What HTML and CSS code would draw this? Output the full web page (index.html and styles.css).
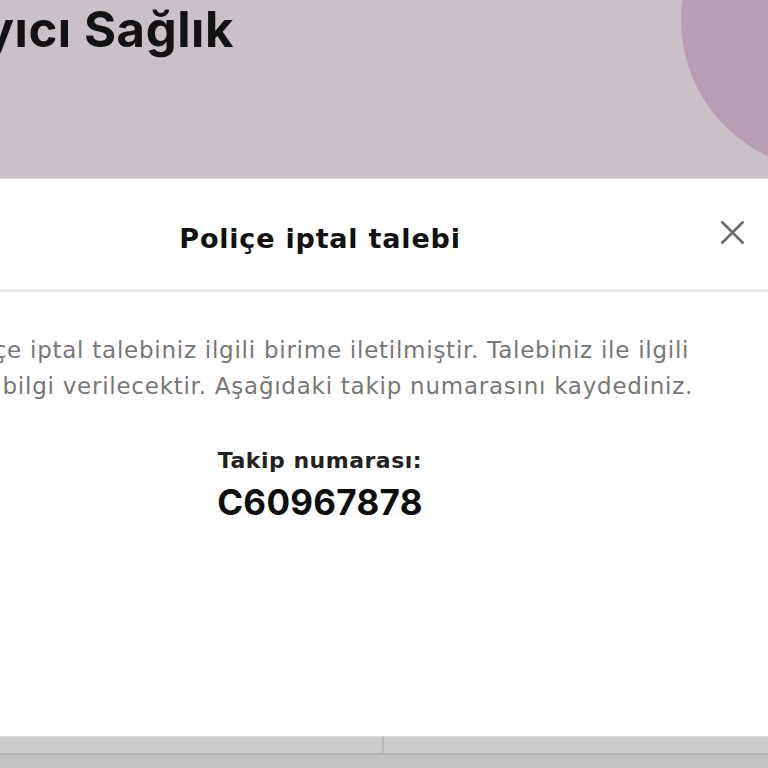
FILE: index.html
```html
<!DOCTYPE html>
<html lang="tr">
<head>
<meta charset="utf-8">
<title>Poliçe iptal talebi</title>
<link rel="stylesheet" href="styles.css">
</head>
<body>
<div class="page">
  <header class="hero">
    <div class="hero-title-wrap"><h1 class="hero-title">Tamamlayıcı Sağlık</h1></div>
    <span class="hero-circle"></span>
  </header>
  <section class="modal">
    <div class="modal-header">
      <span class="spacer"></span>
      <h2 class="modal-title">Poliçe iptal talebi</h2>
      <button class="close" aria-label="Kapat">
        <svg width="25" height="25" viewBox="0 0 25 25"><path d="M1.5 1.5 L23.5 23.5 M23.5 1.5 L1.5 23.5" stroke="#6d6d6d" stroke-width="2.6" fill="none"/></svg>
      </button>
    </div>
    <div class="modal-body">
      <p class="message">Poliçe iptal talebiniz ilgili birime iletilmiştir. Talebiniz ile ilgili<br>size bilgi verilecektir. Aşağıdaki takip numarasını kaydediniz.</p>
      <p class="track-label">Takip numarası:</p>
      <p class="track-number">C60967878</p>
    </div>
    <div class="modal-footer">
      <span class="foot-btn foot-left"></span>
      <span class="foot-btn foot-right"></span>
    </div>
  </section>
</div>
</body>
</html>
```

FILE: styles.css
```css
html, body {
  margin: 0;
  padding: 0;
  width: 768px;
  height: 768px;
  overflow: hidden;
  background: #c3c3c3;
  font-family: Inter, "Noto Sans", sans-serif;
}

.page {
  width: 768px;
  height: 768px;
  overflow: hidden;
}

.hero {
  height: 178px;
  background: #c9c0c8;
  position: relative;
  overflow: hidden;
  border-bottom: 1px solid #dcd6db;
}

.hero-title-wrap {
  display: flex;
  justify-content: flex-end;
  width: 234px;
  height: 60px;
}

.hero-title {
  margin: 0;
  white-space: nowrap;
  font-size: 49px;
  font-weight: 700;
  line-height: 60px;
  color: #121212;
  letter-spacing: 0.6px;
  position: relative;
  z-index: 1;
}

.hero-circle {
  position: absolute;
  left: 681px;
  top: -130px;
  width: 300px;
  height: 300px;
  border-radius: 50%;
  background: #b89db3;
}

.modal {
  margin-left: -140px;
  width: 920px;
  background: #fff;
  height: 589px;
  display: flex;
  flex-direction: column;
}

.modal-header {
  height: 110px;
  display: grid;
  grid-template-columns: 1fr auto 1fr;
  align-items: center;
  border-bottom: 3px solid #ececec;
}

.modal-title {
  margin: 0;
  font-family: "DejaVu Sans", sans-serif;
  font-size: 27px;
  font-weight: 700;
  color: #111;
  letter-spacing: 0.8px;
  padding-top: 8px;
}

.close {
  justify-self: end;
  margin-right: 35px;
  background: none;
  border: 0;
  padding: 0;
  width: 25px;
  height: 25px;
  display: flex;
  margin-bottom: 4px;
}

.modal-body {
  flex: 1;
  text-align: center;
  padding-top: 40px;
}

.message {
  margin: 0;
  font-family: "DejaVu Sans", sans-serif;
  font-size: 23px;
  line-height: 36px;
  color: #777;
  letter-spacing: 0.75px;
}

.track-label {
  margin: 42px 0 0;
  font-family: "DejaVu Sans", sans-serif;
  font-size: 22px;
  font-weight: 700;
  line-height: 30px;
  color: #222;
  letter-spacing: 0.5px;
}

.track-number {
  margin: 5px 0 0;
  font-size: 35px;
  font-weight: 700;
  line-height: 42px;
  color: #0e0e0e;
  letter-spacing: 0.3px;
}

.modal-footer {
  height: 32px;
  display: flex;
  background: #c3c3c3;
}

.foot-btn {
  display: block;
  height: 16px;
  background: #cdcdcd;
  border-top: 1px solid #dadada;
  border-bottom: 2px solid #b5b5b5;
}

.foot-left {
  width: 522px;
  border-right: 2px solid #b9b9b9;
}

.foot-right {
  flex: 1;
}
```
